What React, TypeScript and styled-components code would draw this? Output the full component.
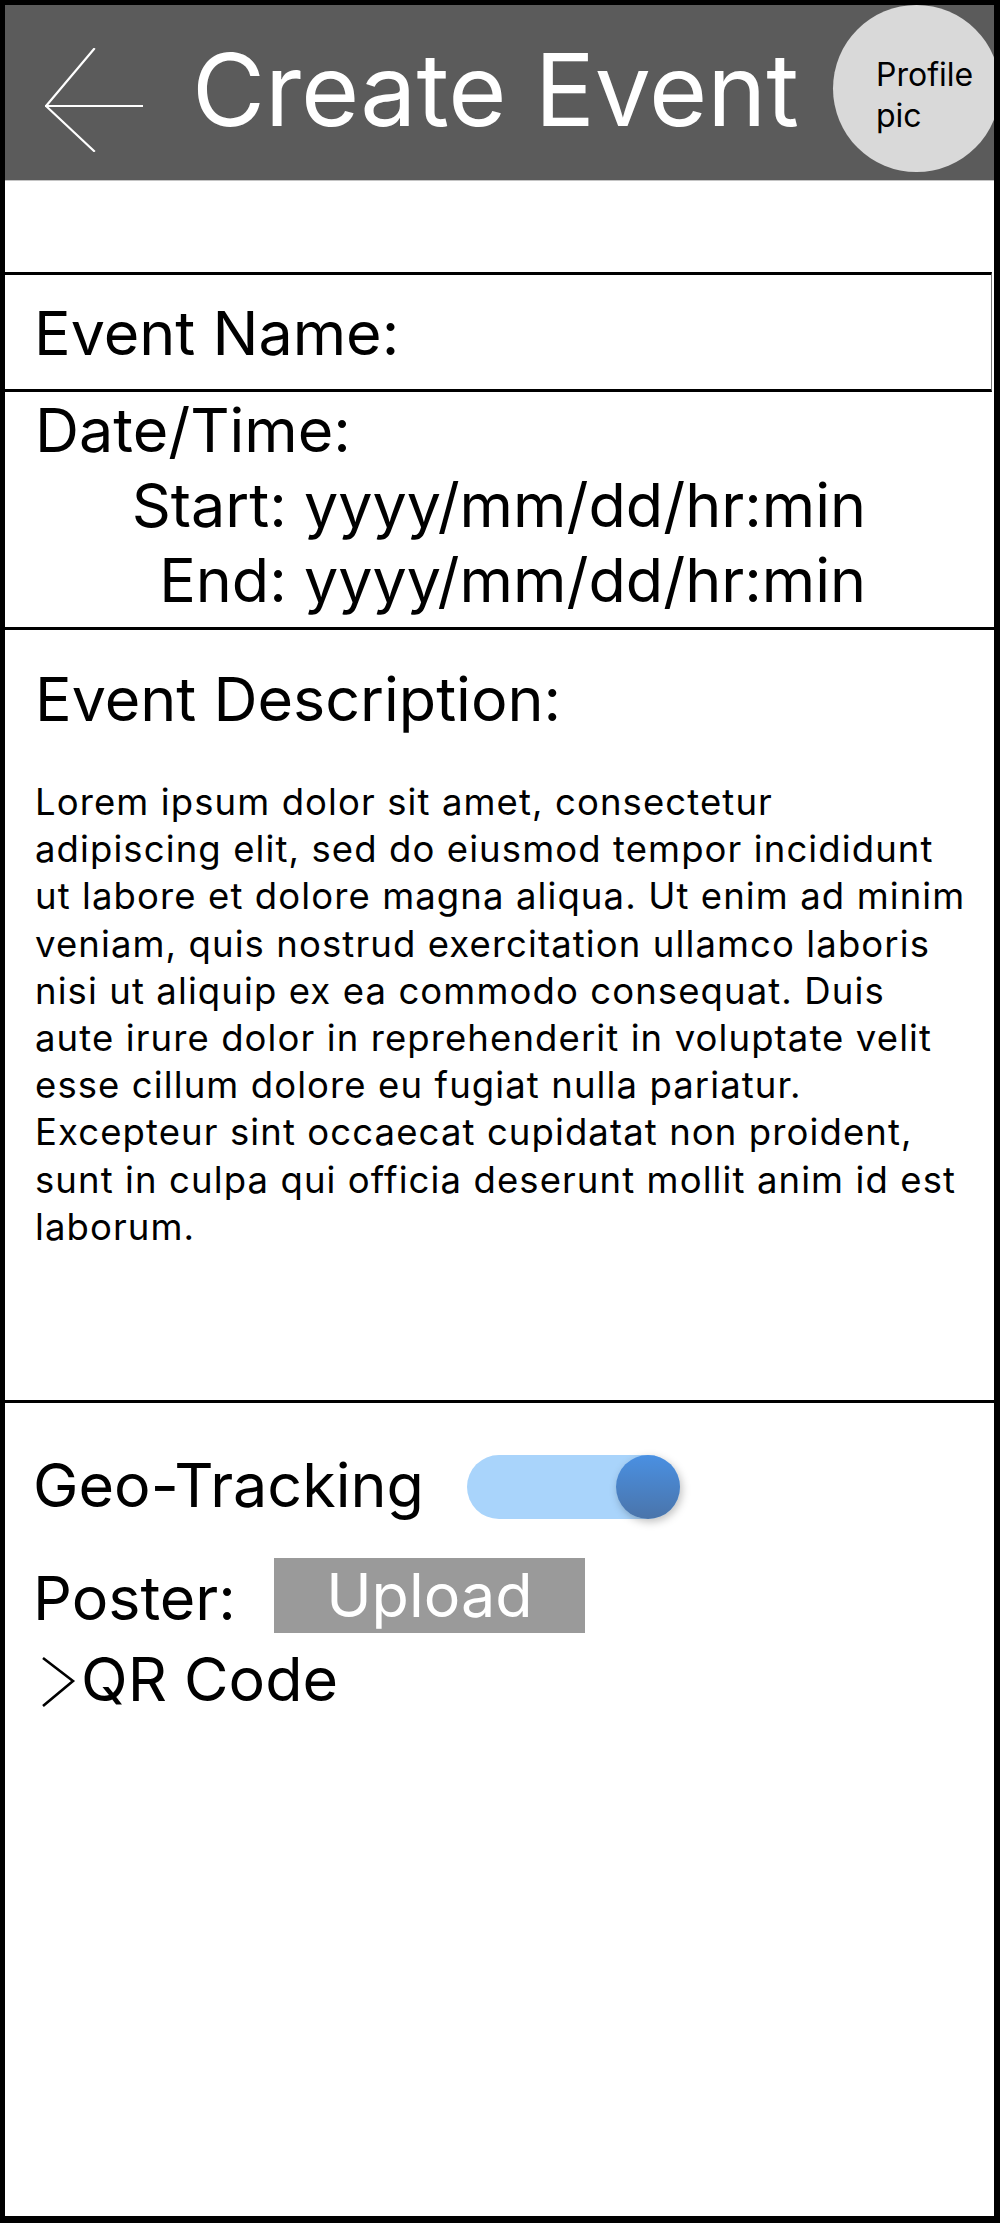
import React from "react";
import styled, { createGlobalStyle } from "styled-components";

const Global = createGlobalStyle`
  html, body { margin: 0; padding: 0; background: #fff; }
  body { font-family: Inter, "Noto Sans", Arial, sans-serif; color: #000; }
  * { box-sizing: border-box; }
`;

const Frame = styled.div`
  width: 1000px;
  height: 2223px;
  border-style: solid;
  border-color: #000;
  border-width: 5px 6px 7px 5px;
  display: flex;
  flex-direction: column;
  overflow: hidden;
  background: #fff;
`;

const Header = styled.header`
  height: 176px;
  flex: none;
  background: #5b5b5b;
  border-bottom: 1px solid #c4c4c4;
  display: flex;
  align-items: center;
  padding-left: 40px;
`;

const BackIcon = styled.svg`
  width: 98px;
  height: 104px;
  flex: none;
  align-self: flex-start;
  margin-top: 43px;
`;

const Title = styled.h1`
  margin: 0 0 6px 49px;
  font-size: 100px;
  font-weight: 400;
  color: #fff;
  line-height: 1.21;
  white-space: nowrap;
`;

const Avatar = styled.div`
  margin-left: auto;
  margin-right: -6px;
  align-self: flex-start;
  width: 167px;
  height: 167px;
  border-radius: 50%;
  background: #d9d9d9;
  display: flex;
  flex-direction: column;
  justify-content: center;
  padding: 13px 0 0 43px;
  font-size: 32px;
  line-height: 41px;
  color: #000;
`;

const Spacer = styled.div`
  height: 91px;
  flex: none;
`;

const NameBox = styled.section`
  flex: none;
  height: 120px;
  border-top: 3px solid #000;
  border-bottom: 3px solid #000;
  border-right: 1px solid #777;
  margin-right: 2px;
  padding: 21px 0 0 29px;
`;

const Label = styled.div`
  font-size: 61px;
  line-height: 75px;
  white-space: nowrap;
`;

const DateBox = styled.section`
  flex: none;
  border-bottom: 3px solid #000;
  padding: 1px 0 9px 30px;
`;

const DateLine = styled.div`
  font-size: 61px;
  line-height: 75px;
  text-align: right;
  padding-right: 128px;
  white-space: nowrap;
`;

const DescBox = styled.section`
  flex: none;
  border-bottom: 3px solid #000;
  padding: 32px 20px 149px 30px;
`;

const Paragraph = styled.p`
  margin: 42px 0 0;
  font-size: 36.5px;
  letter-spacing: 1.1px;
  line-height: 47.2px;
  white-space: nowrap;
`;

const Options = styled.section`
  flex: 1;
  padding: 45px 0 0 28px;
  display: flex;
  flex-direction: column;
`;

const Row = styled.div<{ $gap?: number; $mt?: number }>`
  display: flex;
  align-items: center;
  gap: ${(p) => p.$gap ?? 0}px;
  margin-top: ${(p) => p.$mt ?? 0}px;
`;

const Toggle = styled.div`
  width: 213px;
  height: 64px;
  border-radius: 32px;
  background: #a9d4fb;
  display: flex;
  justify-content: flex-end;
  flex: none;
  margin-top: 3px;
`;

const Knob = styled.div`
  width: 64px;
  height: 64px;
  border-radius: 50%;
  background: linear-gradient(180deg, #4a90e2 0%, #4a74aa 100%);
  box-shadow: 2px 3px 8px rgba(0, 0, 0, 0.25);
`;

const UploadButton = styled.button`
  width: 311px;
  height: 75px;
  border: none;
  background: #9a9a9a;
  color: #fff;
  font-family: inherit;
  font-size: 61px;
  line-height: 75px;
  padding: 0;
  margin-top: -6px;
  cursor: pointer;
`;

const Chevron = styled.svg`
  width: 36px;
  height: 52px;
  flex: none;
  margin-left: 7px;
  margin-right: 5px;
  margin-top: 4px;
`;

const lorem = [
  "Lorem ipsum dolor sit amet, consectetur",
  "adipiscing elit, sed do eiusmod tempor incididunt",
  "ut labore et dolore magna aliqua. Ut enim ad minim",
  "veniam, quis nostrud exercitation ullamco laboris",
  "nisi ut aliquip ex ea commodo consequat. Duis",
  "aute irure dolor in reprehenderit in voluptate velit",
  "esse cillum dolore eu fugiat nulla pariatur.",
  "Excepteur sint occaecat cupidatat non proident,",
  "sunt in culpa qui officia deserunt mollit anim id est",
  "laborum.",
];

export default function App() {
  return (
    <>
      <Global />
      <Frame>
        <Header>
          <BackIcon viewBox="0 0 98 104" fill="none">
            <path
              d="M49 1 L1 58 L49 103 M1 58 L97 58"
              stroke="#fff"
              strokeWidth="2.2"
              strokeLinecap="square"
            />
          </BackIcon>
          <Title>Create Event</Title>
          <Avatar>
            <span>Profile</span>
            <span>pic</span>
          </Avatar>
        </Header>
        <Spacer />
        <NameBox>
          <Label>Event Name:</Label>
        </NameBox>
        <DateBox>
          <Label>Date/Time:</Label>
          <DateLine>Start: yyyy/mm/dd/hr:min</DateLine>
          <DateLine>End: yyyy/mm/dd/hr:min</DateLine>
        </DateBox>
        <DescBox>
          <Label>Event Description:</Label>
          <Paragraph>
            {lorem.map((l, i) => (
              <React.Fragment key={i}>
                {l}
                {i < lorem.length - 1 && <br />}
              </React.Fragment>
            ))}
          </Paragraph>
        </DescBox>
        <Options>
          <Row $gap={43}>
            <Label>Geo-Tracking</Label>
            <Toggle>
              <Knob />
            </Toggle>
          </Row>
          <Row $gap={38} $mt={38}>
            <Label>Poster:</Label>
            <UploadButton>Upload</UploadButton>
          </Row>
          <Row $mt={6}>
            <Chevron viewBox="0 0 36 52" fill="none">
              <path d="M3 2 L33 25 L3 50" stroke="#000" strokeWidth="2.6" />
            </Chevron>
            <Label>QR Code</Label>
          </Row>
        </Options>
      </Frame>
    </>
  );
}
